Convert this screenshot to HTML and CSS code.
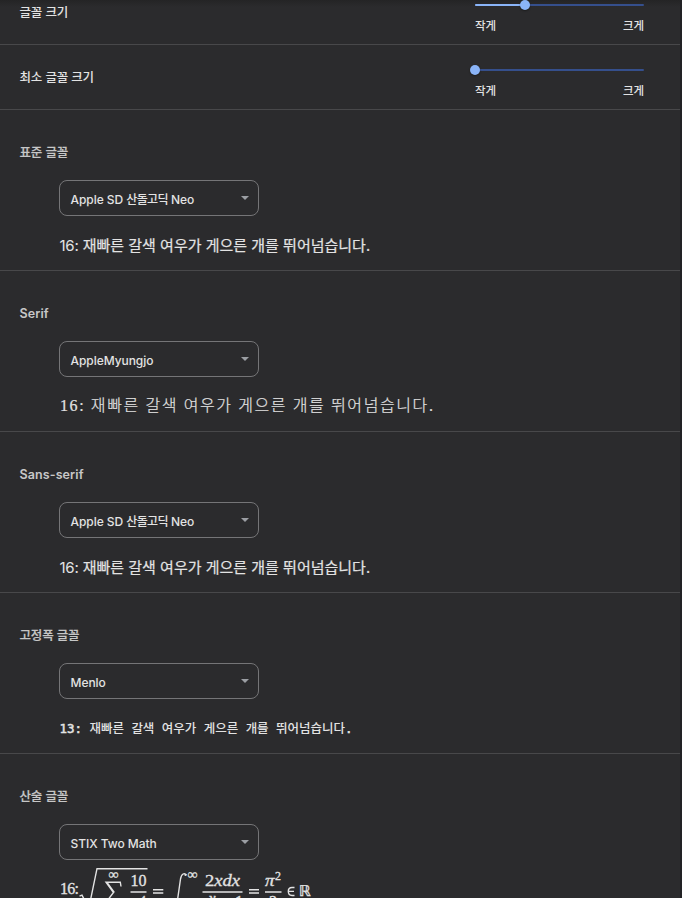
FILE: index.html
```html
<!DOCTYPE html>
<html lang="ko">
<head>
<meta charset="utf-8">
<title>글꼴 맞춤설정</title>
<link rel="stylesheet" href="styles.css">
</head>
<body>
<main class="panel">
  <section class="size-row first">
    <div class="label">글꼴 크기</div>
    <div class="slider">
      <div class="track"><div class="fill" style="width:49.5px"></div><div class="knob"></div></div>
      <div class="ends"><span>작게</span><span>크게</span></div>
    </div>
  </section>
  <section class="size-row">
    <div class="label">최소 글꼴 크기</div>
    <div class="slider">
      <div class="track"><div class="fill" style="width:0px"></div><div class="knob"></div></div>
      <div class="ends"><span>작게</span><span>크게</span></div>
    </div>
  </section>
  <section class="font-row">
    <h2>표준 글꼴</h2>
    <div class="select"><span>Apple SD <span class="ko">산돌고딕</span> Neo</span><i class="arrow"></i></div>
    <p class="sample sans"><span class="num">16:</span> 재빠른 갈색 여우가 게으른 개를 뛰어넘습니다.</p>
  </section>
  <section class="font-row">
    <h2 class="latin">Serif</h2>
    <div class="select"><span>AppleMyungjo</span><i class="arrow"></i></div>
    <p class="sample serif">16: 재빠른 갈색 여우가 게으른 개를 뛰어넘습니다.</p>
  </section>
  <section class="font-row">
    <h2 class="latin">Sans-serif</h2>
    <div class="select"><span>Apple SD <span class="ko">산돌고딕</span> Neo</span><i class="arrow"></i></div>
    <p class="sample sans"><span class="num">16:</span> 재빠른 갈색 여우가 게으른 개를 뛰어넘습니다.</p>
  </section>
  <section class="font-row">
    <h2>고정폭 글꼴</h2>
    <div class="select"><span>Menlo</span><i class="arrow"></i></div>
    <p class="sample mono"><span class="code">13:</span> 재빠른 갈색 여우가 게으른 개를 뛰어넘습니다<span class="code">.</span></p>
  </section>
  <section class="font-row math-row">
    <h2>산술 글꼴</h2>
    <div class="select"><span>STIX Two Math</span><i class="arrow"></i></div>
    <svg class="formula" width="270" height="38" viewBox="60 860 270 38">
      <text x="60" y="894" textLength="19">16:</text>
      <path d="M79.500 896.200 82 895.200 84 899M90.500 900 97 868.700H147.500" class="rule thick"/>
      <text x="108.500" y="879" font-size="14" textLength="10.500">∞</text>
      <path d="M121 886.500 120.300 882.200H106L113.500 892.500 105.500 903M106.800 882.200 114.300 892.500" class="rule thick"/>
      <text x="118" y="906" font-size="11">k</text>
      <text x="130.500" y="886" textLength="16">10</text>
      <path d="M130.500 892H146.500M153 889.700H163.300M153 893H163.300" class="rule thick"/>
      <text x="139.500" y="904" font-size="13">4</text>
      <path d="M186.500 875C184.500 872.500 181.500 873.500 180.500 879L177.500 900" class="rule thick"/>
      <circle cx="185.500" cy="875" r="1.100" class="dot"/>
      <text x="187.500" y="879" font-size="14" textLength="10.500">∞</text>
      <text x="205" y="886" textLength="35" lengthAdjust="spacingAndGlyphs">2<tspan class="it">xdx</tspan></text>
      <path d="M202.500 892H242.500M249 889.700H259M249 893H259M265 892H281.500" class="rule thick"/>
      <text x="208.500" y="904" class="it">x</text>
      <text x="235" y="907">1</text>
      <text x="265" y="886" class="it" textLength="9.500" lengthAdjust="spacingAndGlyphs">π</text>
      <text x="275" y="880" font-size="12">2</text>
      <text x="269" y="907">3</text>
      <path d="M294.500 887.500H292C289.500 887.500 288.300 889 288.300 891.300S289.500 895.500 292 895.500H294.500M288.500 891.400H294" class="rule thick"/>
      <text x="299" y="896" class="bb" textLength="12" lengthAdjust="spacingAndGlyphs">ℝ</text>
    </svg>
  </section>
</main>
</body>
</html>
```

FILE: styles.css
```css
* { box-sizing: border-box; }
body {
  margin: 0;
  height: 898px;
  overflow: hidden;
  background: #222225;
  color: #e3e3e3;
  font: 500 12px/18px Inter, "Noto Sans CJK KR", sans-serif;
}
.panel {
  width: 680px;
  height: 898px;
  overflow: hidden;
  background: linear-gradient(#242425, #2b2b2d 7px);
}
.size-row {
  display: flex;
  justify-content: space-between;
  height: 65px;
  padding: 23px 36px 0 19.5px;
  border-bottom: 1px solid #48484a;
}
.size-row.first { height: 45px; padding-top: 3px; }
.label { margin-top: 1px; font-size: 12.5px; letter-spacing: -0.15px; }
.slider { width: 169px; margin-top: 1px; }
.track {
  display: flex;
  align-items: center;
  height: 2px;
  background: #354f8c;
  border-radius: 1px;
}
.fill { height: 2px; background: #8ab4f8; border-radius: 1px; }
.knob {
  flex: none;
  width: 10px;
  height: 10px;
  margin-left: -4.7px;
  border-radius: 50%;
  background: #8ab4f8;
  box-shadow: 0 1px 2px #0006;
}
.ends {
  display: flex;
  justify-content: space-between;
  margin-top: 11px;
  font-size: 11.5px;
  letter-spacing: -0.1px;
}
.font-row {
  height: 161px;
  padding: 34px 0 0 19.5px;
  border-bottom: 1px solid #48484a;
}
h2 {
  margin: 0;
  height: 18px;
  font-size: 12.5px;
  line-height: 18px;
  font-weight: 500;
  color: #c7c7c7;
  letter-spacing: -0.15px;
  -webkit-text-stroke: 0.2px;
}
h2.latin { font-weight: 600; letter-spacing: 0.1px; -webkit-text-stroke: 0; }
.select {
  display: flex;
  align-items: center;
  justify-content: space-between;
  width: 200px;
  height: 36px;
  margin: 18px 0 0 39.5px;
  padding: 3px 9px 0 10.5px;
  border: 1px solid #757577;
  border-radius: 8px;
  font-size: 12px;
  font-weight: 500;
  letter-spacing: -0.05px;
  white-space: nowrap;
}
.ko { letter-spacing: -0.65px; }
.arrow {
  margin-top: -4px;
  border: 4px solid transparent;
  border-top-color: #9b9ea3;
  border-bottom: 0;
}
.sample {
  width: max-content;
  height: 24px;
  margin: 17px 0 0 40px;
  line-height: 24px;
  white-space: nowrap;
}
.sans { font: 400 15px/24px "Noto Sans CJK KR", sans-serif; -webkit-text-stroke: 0.2px; }
.num { font-family: Inter, sans-serif; font-size: 15px; letter-spacing: -0.25px; -webkit-text-stroke: 0; }
.serif { padding-left: 0.5px; font: 300 16px/24px "Liberation Serif", "Noto Sans CJK KR", serif; letter-spacing: 1.6px; -webkit-text-stroke: 0.2px; }
.mono { padding-top: 1px; font: 500 12.5px/24px "DejaVu Sans Mono", "Noto Sans CJK KR", monospace; letter-spacing: -0.03px; }
.code { -webkit-text-stroke: 0.5px; }
.math-row { border: 0; }
.formula {
  display: block;
  margin-left: 40px;
  fill: #e3e3e3;
  font: 400 16px "Liberation Serif", "DejaVu Serif", serif;
}
.formula text { stroke: #e3e3e3; stroke-width: 0.3px; }
.it { font-style: italic; }
.bb { font-family: "DejaVu Sans", sans-serif; font-size: 15px; }
.rule { fill: none; stroke: #e3e3e3; stroke-width: 1.2; }
.thick { stroke-width: 1.4; }
.dot { fill: #e3e3e3; }
```
